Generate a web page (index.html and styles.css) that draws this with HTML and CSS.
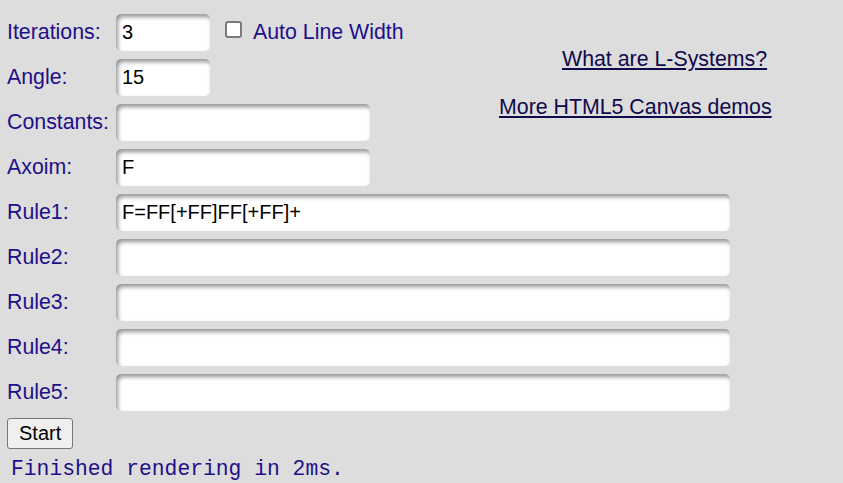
FILE: index.html
```html
<!DOCTYPE html>
<html>
<head>
<meta charset="utf-8">
<title>L-Systems</title>
<link rel="stylesheet" href="styles.css">
</head>
<body>
<div class="page">
  <div class="top">
    <div class="form-top">
      <div class="row">
        <label class="lbl">Iterations:</label>
        <input class="field small" type="text" value="3">
        <span class="check"></span>
        <span class="check-label">Auto Line Width</span>
      </div>
      <div class="row">
        <label class="lbl">Angle:</label>
        <input class="field small" type="text" value="15">
      </div>
      <div class="row">
        <label class="lbl">Constants:</label>
        <input class="field medium" type="text" value="">
      </div>
      <div class="row">
        <label class="lbl">Axoim:</label>
        <input class="field medium" type="text" value="F">
      </div>
    </div>
    <div class="links">
      <a class="link link-one" href="#">What are L-Systems?</a>
      <a class="link link-two" href="#">More HTML5 Canvas demos</a>
    </div>
  </div>
  <div class="row">
    <label class="lbl">Rule1:</label>
    <input class="field wide" type="text" value="F=FF[+FF]FF[+FF]+">
  </div>
  <div class="row">
    <label class="lbl">Rule2:</label>
    <input class="field wide" type="text" value="">
  </div>
  <div class="row">
    <label class="lbl">Rule3:</label>
    <input class="field wide" type="text" value="">
  </div>
  <div class="row">
    <label class="lbl">Rule4:</label>
    <input class="field wide" type="text" value="">
  </div>
  <div class="row">
    <label class="lbl">Rule5:</label>
    <input class="field wide" type="text" value="">
  </div>
  <button class="start" type="button">Start</button>
  <div class="status">Finished rendering in 2ms.</div>
</div>
</body>
</html>
```
FILE: styles.css
```css
html, body {
  margin: 0;
  padding: 0;
  background: #dddddd;
}

.page {
  padding: 10px 0 0 7px;
  font-family: "Liberation Sans", Arial, sans-serif;
  font-size: 21.33px;
  color: #1e0f8a;
}

.top {
  display: flex;
}

.form-top {
  width: 481px;
}

.row {
  display: flex;
  align-items: center;
  height: 45px;
}

.lbl {
  width: 109px;
  flex: none;
  color: #1e0f8a;
}

.field {
  height: 37px;
  box-sizing: border-box;
  border: none;
  border-radius: 5px;
  background: #ffffff;
  box-shadow: inset 2px 3px 4px rgba(0, 0, 0, 0.42);
  padding: 0 6px;
  font-family: "Liberation Sans", Arial, sans-serif;
  font-size: 20px;
  color: #000000;
  outline: none;
}

.small {
  width: 94px;
}

.medium {
  width: 254px;
}

.wide {
  width: 614px;
}

.check {
  width: 17px;
  height: 17px;
  box-sizing: border-box;
  border: 2px solid #7a7a7a;
  border-radius: 3px;
  background: #ffffff;
  margin-left: 15px;
  margin-top: -6px;
}

.check-label {
  margin-left: 11px;
}

.links {
  display: flex;
  flex-direction: column;
  padding-top: 37px;
}

.link {
  color: #0f0a4a;
  text-decoration: underline;
  white-space: nowrap;
}

.link-one {
  margin-left: 74px;
}

.link-two {
  margin-left: 11px;
  margin-top: 23px;
}

.start {
  margin-top: 3px;
  font-family: "Liberation Sans", Arial, sans-serif;
  font-size: 20px;
  color: #000000;
  background: #efefef;
  border: 1px solid #767676;
  border-radius: 3px;
  padding: 3px 11px;
  height: 31px;
  line-height: 23px;
  display: block;
}

.status {
  margin-top: 8px;
  margin-left: 4px;
  font-family: "Liberation Mono", "Courier New", monospace;
  font-size: 21.33px;
  color: #1e0f8a;
}
```
